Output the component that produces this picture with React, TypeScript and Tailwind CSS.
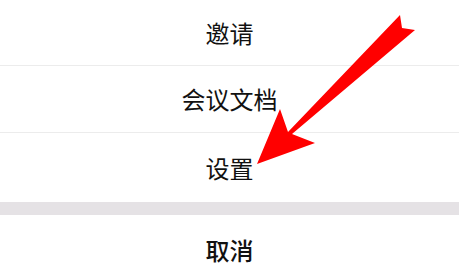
import React from "react";

const rowText = "text-[24px] leading-none text-[#111111]";

export default function App() {
  return (
    <div
      className="relative w-[459px] h-[269px] overflow-hidden bg-white"
      style={{ fontFamily: '"Noto Sans CJK SC", "Noto Sans", sans-serif' }}
    >
      <div className="flex flex-col">
        <div className="h-[66px] flex items-center justify-center border-b border-[#ececec]">
          <span className={rowText}>邀请</span>
        </div>
        <div className="h-[67px] flex items-center justify-center border-b border-[#ececec]">
          <span className={rowText}>会议文档</span>
        </div>
        <div className="h-[69px] flex items-center justify-center">
          <span className={rowText}>设置</span>
        </div>
        <div className="h-[13px] bg-[#e5e2e5]" />
        <div className="h-[70px] flex items-center justify-center">
          <span className={`${rowText} font-medium`}>取消</span>
        </div>
      </div>
      <svg
        className="absolute left-0 top-0"
        width="459"
        height="269"
        viewBox="0 0 459 269"
      >
        <polygon
          points="257,164 280,109 288,132 400,15 402,28 415,30 292,134 315,143"
          fill="#ff0000"
        />
      </svg>
    </div>
  );
}
